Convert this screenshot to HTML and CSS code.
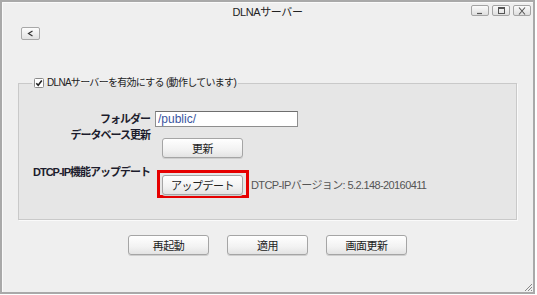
FILE: index.html
```html
<!DOCTYPE html>
<html lang="ja">
<head>
	<meta charset="UTF-8" />
	<title>DLNAサーバー</title>
	<link rel="stylesheet" href="styles.css">
</head>
<body>
	<!-- ウィンドウ 開始 -->
	<div class="window">
		<div class="titlebar">
			<span></span>
			<span class="title">DLNAサーバー</span>
			<span class="ctrls">
				<span class="ctrl">
					<svg width="8" height="8" viewBox="0 0 8 8"><path d="M1 6.5h5" stroke="#555" stroke-width="1.2"/></svg>
				</span>
				<span class="ctrl">
					<svg width="9" height="8" viewBox="0 0 9 8"><rect x="1.5" y="0.5" width="6" height="6" fill="none" stroke="#555"/><path d="M1.5 1.5h6" stroke="#555"/></svg>
				</span>
				<span class="ctrl">
					<svg width="8" height="8" viewBox="0 0 8 8"><path d="M1 0.5l6 7M7 0.5l-6 7" stroke="#555" stroke-width="1.1"/></svg>
				</span>
			</span>
		</div>

		<div class="back">
			<svg width="7" height="7" viewBox="0 0 7 7"><path d="M5.5 1L1.5 3.5L5.5 6" fill="none" stroke="#333" stroke-width="1.2"/></svg>
		</div>

		<fieldset class="group">
			<legend>
				<span class="chk">
					<svg class="box" width="10" height="10" viewBox="0 0 10 10">
						<rect x="0.5" y="0.5" width="9" height="9" rx="1" fill="#fff" stroke="#8a8a8a"/>
						<path d="M2.3 5.2L4.2 7.2L7.8 2.6" fill="none" stroke="#222" stroke-width="1.6"/>
					</svg>
					DLNAサーバーを有効にする (動作しています)
				</span>
			</legend>

			<div class="row row-folder">
				<span class="lbl">フォルダー</span>
				<input class="txt" type="text" value="/public/">
			</div>
			<div class="row row-db">
				<span class="lbl">データベース更新</span>
				<button class="btn">更新</button>
			</div>
			<div class="row row-dtcp">
				<span class="lbl">DTCP-IP機能アップデート</span>
				<span class="mark">
					<button class="btn">アップデート</button>
				</span>
				<span class="ver">DTCP-IPバージョン: 5.2.148-20160411</span>
			</div>
		</fieldset>

		<div class="actions">
			<button class="btn">再起動</button>
			<button class="btn">適用</button>
			<button class="btn">画面更新</button>
		</div>

		<svg class="grip" width="10" height="10" viewBox="0 0 10 10">
			<path d="M9 2L2 9M9 5L5 9M9 8L8 9" stroke="#888" stroke-width="1"/>
		</svg>
	</div>
	<!-- ウィンドウ 終了 -->
</body>
</html>
```

FILE: styles.css
```css
*{
	margin:0;
	padding:0;
	box-sizing:border-box;
}
body{
	background:#fff;
	font-family:"Liberation Sans","Noto Sans CJK JP",sans-serif;
	font-size:11px;
	color:#222;
}
.window{
	position:relative;
	width:535px;
	height:294px;
	border:2px solid #a9a9a9;
	background:#efefef;
	box-shadow:inset 1px 1px 0 #fafafa;
}
/* タイトルバー */
.titlebar{
	display:grid;
	grid-template-columns:1fr auto 1fr;
	align-items:center;
	height:19px;
}
.title{
	font-size:11px;
	letter-spacing:-0.4px;
	color:#222;
	line-height:16px;
}
.ctrls{
	display:flex;
	justify-content:flex-end;
	gap:3px;
	padding-right:2px;
	margin-top:-2px;
}
.ctrl{
	display:flex;
	align-items:center;
	justify-content:center;
	width:18px;
	height:11px;
	border:1px solid #a4a4a4;
	border-radius:2px;
	background:linear-gradient(#fbfbfb,#dedede);
}
/* 戻る */
.back{
	display:flex;
	align-items:center;
	justify-content:center;
	width:19px;
	height:13px;
	margin:6px 0 0 19px;
	border:1px solid #a8a8a8;
	border-radius:2px;
	background:linear-gradient(#fdfdfd,#e2e2e2);
}
/* グループ */
.group{
	margin:35px 16px 0 16px;
	padding:20px 0 21px 0;
	border:1px solid #c9c9c9;
	background:#e6e6e6;
	box-shadow:1px 1px 0 #fafafa;
}
.group legend{
	margin-left:13px;
	padding:0 2px 0 2px;
	line-height:16px;
}
.chk{
	display:flex;
	align-items:center;
	gap:3px;
	font-size:10px;
	color:#222;
	letter-spacing:-0.7px;
}
.row{
	display:flex;
	align-items:flex-start;
}
.lbl{
	width:131px;
	flex:none;
	text-align:right;
	white-space:nowrap;
	font-weight:bold;
	letter-spacing:-1px;
	color:#1c1c2c;
	line-height:14px;
}
.row-folder{
	align-items:center;
}
.txt{
	width:143px;
	height:16px;
	margin-left:5px;
	padding:0 2px;
	border:1px solid #8e8e8e;
	border-top-color:#6e6e6e;
	background:#fff;
	font-family:"Liberation Sans","Noto Sans CJK JP",sans-serif;
	font-size:12px;
	color:#3a55a0;
	outline:none;
}
.row-db{
	margin-top:1px;
}
.row-db .btn{
	margin:10px 0 0 12px;
}
.row-dtcp{
	margin-top:7px;
}
.mark{
	display:flex;
	margin:5px 0 0 7px;
	padding:2px 3px 0 2px;
	border:3px solid #e60000;
}
.ver{
	margin:13px 0 0 2px;
	color:#555;
	letter-spacing:-0.6px;
	line-height:14px;
}
/* ボタン */
.btn{
	width:81px;
	height:20px;
	border:1px solid #a5a5a5;
	border-radius:3px;
	background:linear-gradient(#ffffff,#f2f2f2 60%,#e3e3e3);
	box-shadow:0 1px 0 #cfcfcf;
	font-family:"Liberation Sans","Noto Sans CJK JP",sans-serif;
	font-size:11px;
	letter-spacing:-0.5px;
	color:#222;
}
.actions{
	display:flex;
	justify-content:center;
	gap:18px;
	margin-top:15px;
}
.grip{
	position:absolute;
	right:0;
	bottom:0;
}
```
